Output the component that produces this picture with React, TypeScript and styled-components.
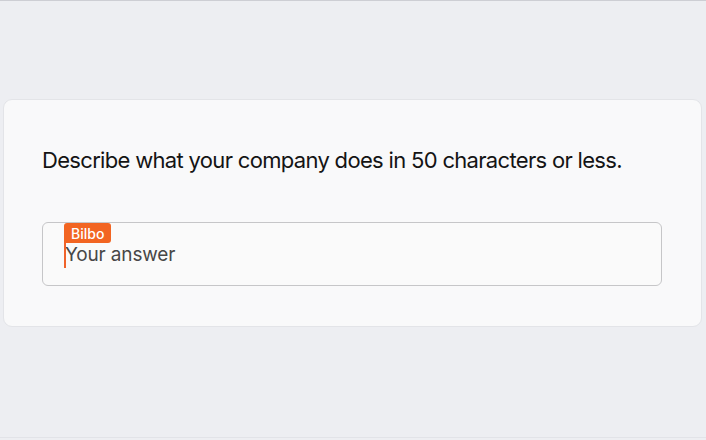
import React from "react";
import styled, { createGlobalStyle } from "styled-components";

const Global = createGlobalStyle`
  html, body { margin: 0; padding: 0; }
  body {
    background: #edeef2;
    font-family: Inter, "Noto Sans", sans-serif;
    height: 440px;
    overflow: hidden;
  }
`;

const Page = styled.div`
  height: 438px;
  border-top: 1px solid #cdced4;
  border-bottom: 1px solid #e2e3e8;
  padding: 98px 4px 0 3px;
  box-sizing: border-box;
`;

const Card = styled.section`
  background: #f9f9fa;
  border: 1px solid #e3e4e8;
  border-radius: 9px;
  padding: 45px 39px 40px 38px;
  box-sizing: border-box;
`;

const Question = styled.h1`
  margin: 0 0 47px;
  font-family: Inter, "Noto Sans", sans-serif;
  font-weight: 400;
  font-size: 22px;
  line-height: 30px;
  letter-spacing: -0.68px;
  color: #141414;
`;

const Field = styled.div`
  position: relative;
  height: 64px;
  border: 1px solid #c6c6c8;
  border-radius: 6px;
  box-sizing: border-box;
  display: flex;
  align-items: center;
  padding: 0 0 0 22px;
  background: #fafafa;
`;

const Placeholder = styled.span`
  font-family: Inter, "Noto Sans", sans-serif;
  font-size: 19px;
  letter-spacing: -0.15px;
  color: #474747;
  margin-top: 1px;
`;

const Cursor = styled.span`
  position: absolute;
  left: 21px;
  top: 19px;
  width: 2px;
  height: 26px;
  background: #f0632a;
`;

const Tag = styled.span`
  position: absolute;
  left: 21px;
  top: 0px;
  height: 20px;
  padding: 0 7px 0 7px;
  display: flex;
  align-items: center;
  background: #f26522;
  color: #ffffff;
  font-family: Inter, "Noto Sans", sans-serif;
  font-weight: 500;
  font-size: 14px;
  border-radius: 3px 3px 3px 0;
`;

export default function App() {
  return (
    <>
      <Global />
      <Page>
        <Card>
          <Question>Describe what your company does in 50 characters or less.</Question>
          <Field>
            <Tag>Bilbo</Tag>
            <Cursor />
            <Placeholder>Your answer</Placeholder>
          </Field>
        </Card>
      </Page>
    </>
  );
}
